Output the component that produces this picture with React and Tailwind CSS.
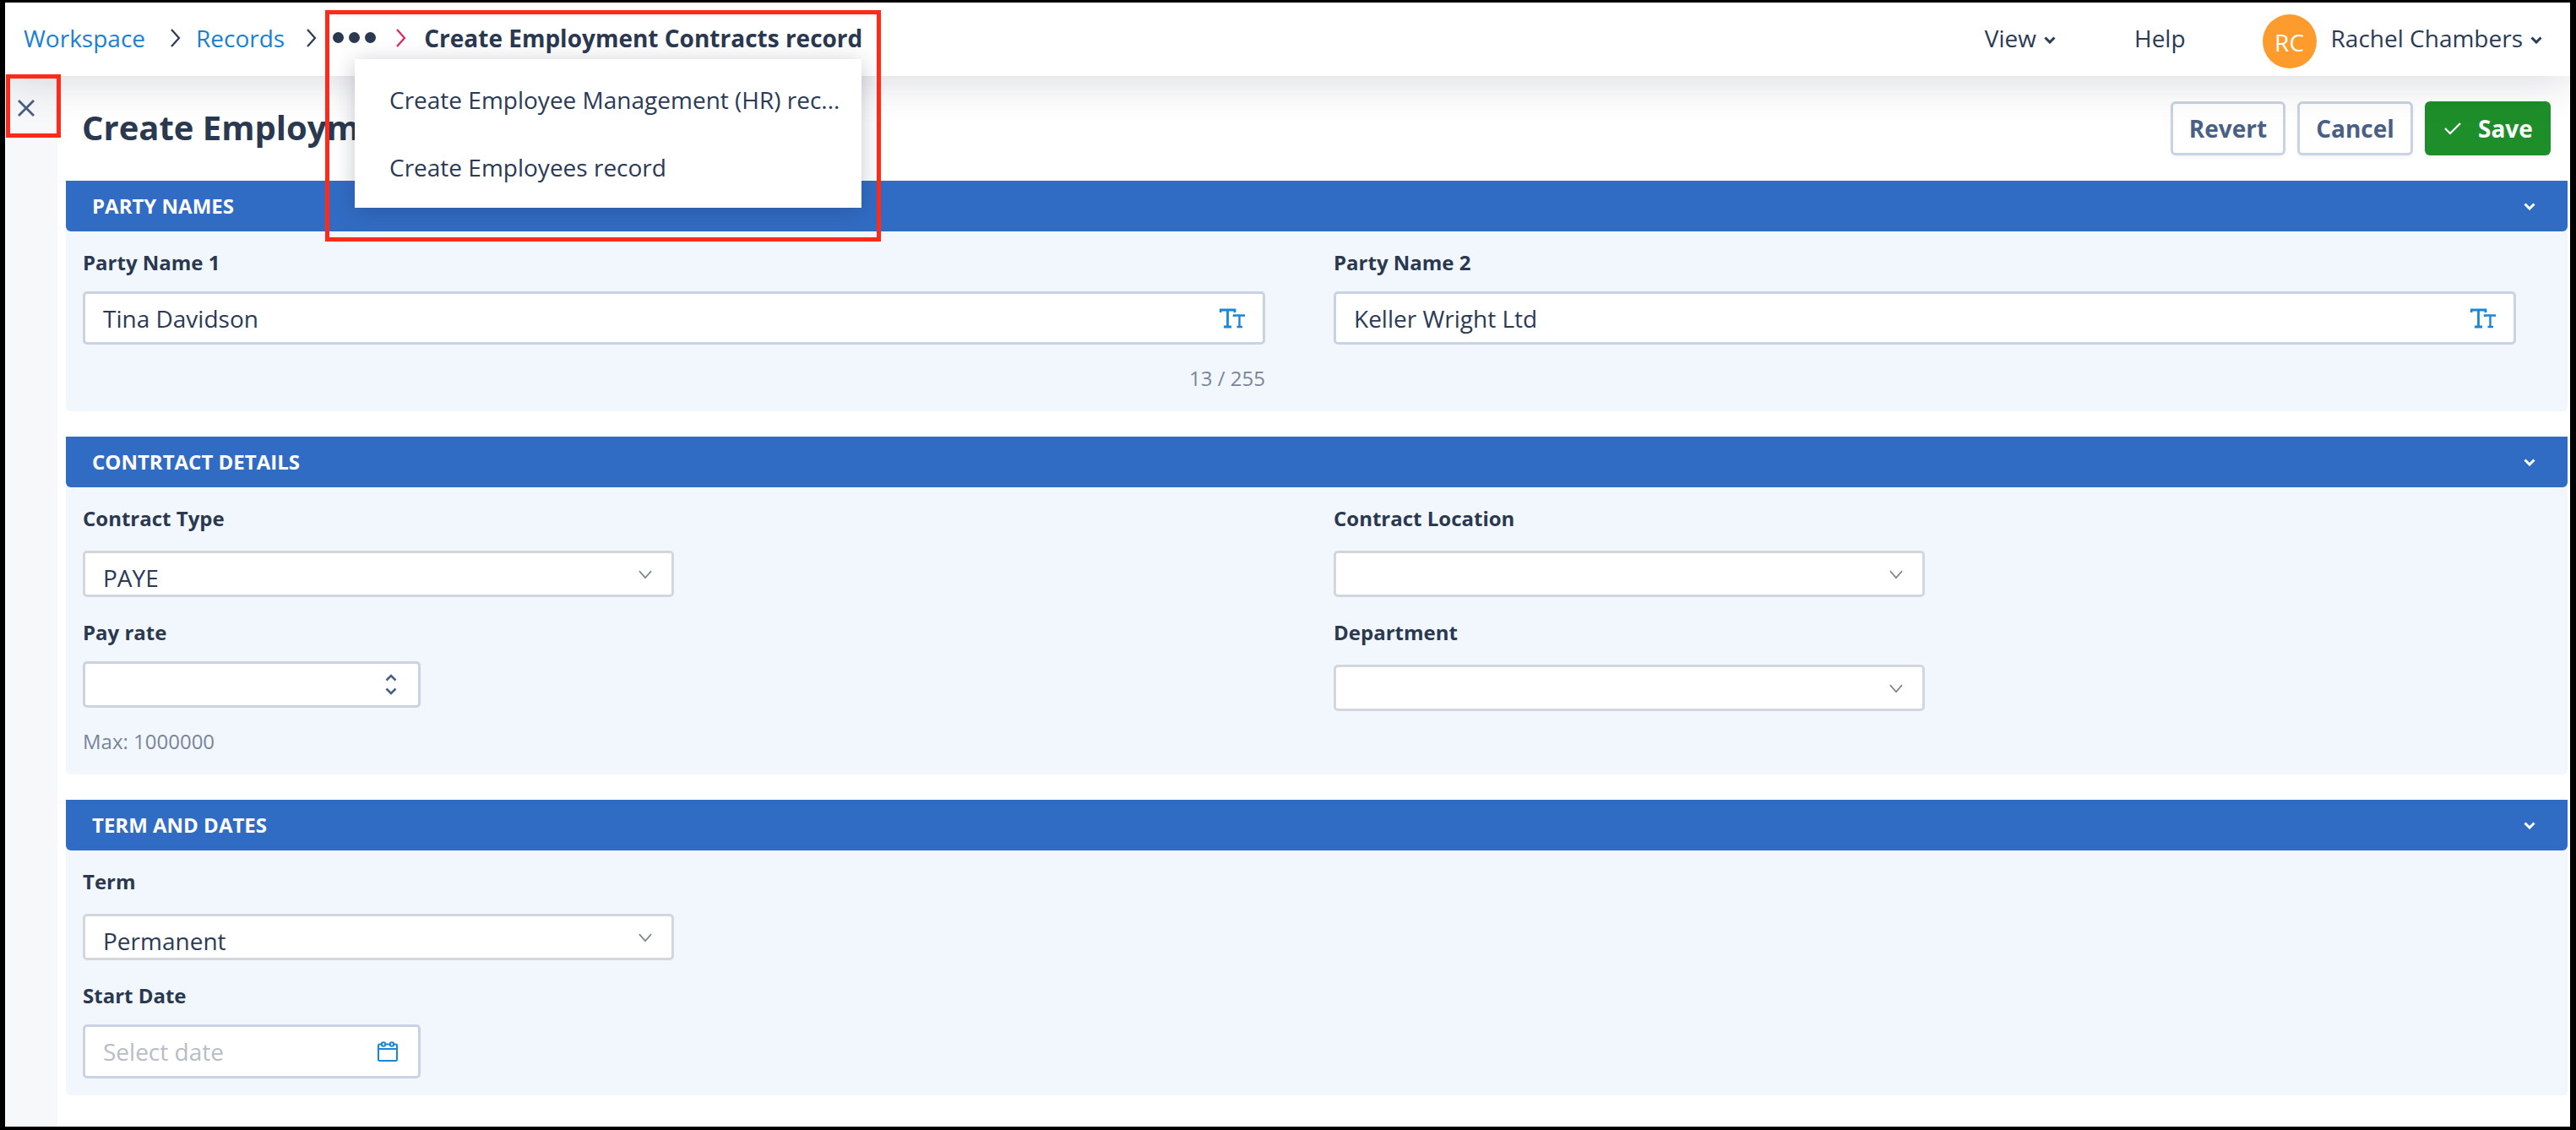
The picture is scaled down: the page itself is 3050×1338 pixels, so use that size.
import React from "react";

const Chev = ({ className = "", w = 14, h = 9, sw = 3, color = "currentColor" }) => (
  <svg width={w} height={h} viewBox="0 0 14 9" className={className} fill="none" preserveAspectRatio="none">
    <path d="M1.5 1.5 L7 7 L12.5 1.5" stroke={color} strokeWidth={sw} />
  </svg>
);

const Crumb = ({ color = "#2b3a55" }) => (
  <svg width="14" height="24" viewBox="0 0 14 24" fill="none">
    <path d="M2 2 L11 12 L2 22" stroke={color} strokeWidth="2.2" />
  </svg>
);

const Tt = () => (
  <svg width="30" height="24" viewBox="0 0 30 24" fill="none" stroke="#1a86d8" strokeWidth="2.8">
    <path d="M1 5 V2 H18 V5 M9.5 2 V22 M5 22 H14" />
    <path d="M17 10 V8.5 H30 V10 M23.5 8.5 V22 M20.5 22 H27" strokeWidth="2.4" />
  </svg>
);

const Label = ({ children }) => (
  <div className="text-[24px] leading-[34px] font-bold text-[#2a3850]">{children}</div>
);

const TextField = ({ label, value, count }) => (
  <div className="flex flex-col">
    <Label>{label}</Label>
    <div className="mt-[17px] h-[63px] bg-white border-[3px] border-[#c9d3e3] rounded-[5px] flex items-center justify-between pl-[21px] pr-[21px]">
      <span className="text-[28px] text-[#2b3a55]">{value}</span>
      <Tt />
    </div>
    {count && (
      <div className="mt-[23px] text-right text-[24px] leading-[34px] text-[#79859a]">{count}</div>
    )}
  </div>
);

const SelectField = ({ label, value, className = "" }) => (
  <div className={`flex flex-col ${className}`}>
    <Label>{label}</Label>
    <div className="mt-[21px] w-[700px] h-[55px] bg-white border-[3px] border-[#d3d6dc] rounded-[5px] flex items-start justify-between pl-[21px] pr-[22px]">
      <span className="text-[28px] leading-[38px] mt-[10px] text-[#2b3a55] h-[38px]">{value}</span>
      <Chev w={18} h={13} sw={1.3} color="#7b8594" className="mt-[19px]" />
    </div>
  </div>
);

const Section = ({ title, children }) => (
  <section className="bg-[#f2f7fe] rounded-[6px]">
    <header className="h-[60px] bg-[#316cc4] rounded-b-[6px] flex items-center justify-between pl-[31px] pr-[38px]">
      <span className="text-[24px] font-bold text-white uppercase">{title}</span>
      <Chev className="text-white" w={14} h={9} sw={3} />
    </header>
    {children}
  </section>
);

export default function App() {
  return (
    <div
      className="relative w-[3050px] h-[1338px] bg-white border-black border-t-[3px] border-l-[6px] border-r-[7px] border-b-[4px] flex flex-col overflow-hidden"
      style={{ fontFamily: '"Open Sans", "Noto Sans", sans-serif' }}
    >
      <nav className="relative z-10 h-[87px] shrink-0 bg-white flex items-center pl-[22px] pr-[33px] shadow-[0_8px_50px_rgba(30,40,60,0.16)] text-[28px] text-[#2b3a55]">
        <div className="flex items-center mt-[-4px]">
          <a className="text-[#1a80d0]">Workspace</a>
          <span className="ml-[29px]"><Crumb /></span>
          <a className="ml-[17px] text-[#1a80d0]">Records</a>
          <span className="ml-[25px]"><Crumb /></span>
          <span className="ml-[18px] flex gap-[6px]">
            <i className="block w-[13px] h-[13px] rounded-full bg-[#2a3850]" />
            <i className="block w-[13px] h-[13px] rounded-full bg-[#2a3850]" />
            <i className="block w-[13px] h-[13px] rounded-full bg-[#2a3850]" />
          </span>
          <span className="ml-[23px]"><Crumb color="#e0245e" /></span>
          <span className="ml-[20px] font-bold text-[#2a3850]">Create Employment Contracts record</span>
        </div>
        <div className="ml-auto flex items-center mt-[-4px]">
          <span>View</span>
          <Chev className="ml-[9px] mt-[5px]" />
          <span className="ml-[93px]">Help</span>
          <div className="ml-[91px] w-[64px] h-[64px] rounded-full bg-[#fd9c2d] text-white flex items-center justify-center mt-[8px] pt-[2px]">RC</div>
          <span className="ml-[17px]">Rachel Chambers</span>
          <Chev className="ml-[9px] mt-[5px]" />
        </div>
      </nav>

      <div className="flex flex-1 min-h-0">
        <aside className="w-[62px] shrink-0 bg-[#f7f8fa] flex justify-center pt-[27px] pr-[12px]">
          <svg width="22" height="22" viewBox="0 0 22 22" fill="none" stroke="#4a5f85" strokeWidth="2.8">
            <path d="M2 2 L20 20 M20 2 L2 20" />
          </svg>
        </aside>
        <main className="flex-1 min-w-0 pl-[10px] pr-[3px]">
          <div className="h-[124px] flex items-center justify-between pl-[19px] pr-[20px]">
            <h1 className="text-[40px] font-bold text-[#2a3850] mt-[-2px]">Create Employment Contracts record</h1>
            <div className="flex gap-[14px] text-[28px] font-bold">
              <button className="w-[136px] h-[64px] bg-white border-[3px] border-[#c9d3e3] rounded-[6px] text-[#4a5f85] shadow-[0_3px_4px_rgba(0,0,0,0.04)]">Revert</button>
              <button className="w-[137px] h-[64px] bg-white border-[3px] border-[#c9d3e3] rounded-[6px] text-[#4a5f85] shadow-[0_3px_4px_rgba(0,0,0,0.04)]">Cancel</button>
              <button className="w-[149px] h-[64px] bg-[#1e8e2a] rounded-[6px] text-white flex items-center pl-[23px] shadow-[0_3px_4px_rgba(0,0,0,0.04)]">
                <svg width="20" height="16" viewBox="0 0 20 16" fill="none" stroke="white" strokeWidth="2.2">
                  <path d="M1 8 L7 14 L19 2" />
                </svg>
                <span className="ml-[20px]">Save</span>
              </button>
            </div>
          </div>

          <div className="flex flex-col gap-[30px]">
            <Section title="Party Names">
              <div className="grid grid-cols-2 gap-x-[81px] pt-[20px] pb-[22px] pl-[20px] pr-[61px]">
                <TextField label="Party Name 1" value="Tina Davidson" count="13 / 255" />
                <TextField label="Party Name 2" value="Keller Wright Ltd" />
              </div>
            </Section>

            <Section title="Contrtact Details">
              <div className="grid grid-cols-2 gap-x-[81px] pt-[20px] pb-[22px] pl-[20px] pr-[61px]">
                <div className="flex flex-col">
                  <SelectField label="Contract Type" value="PAYE" />
                  <div className="mt-[25px]">
                    <Label>Pay rate</Label>
                  </div>
                  <div className="mt-[17px] w-[400px] h-[55px] bg-white border-[3px] border-[#c9d3e3] rounded-[5px] flex items-center justify-end pr-[25px]">
                    <div className="flex flex-col gap-[7px] text-[#4a5f85]">
                      <Chev w={14} h={9} sw={2.6} className="rotate-180" />
                      <Chev w={14} h={9} sw={2.6} />
                    </div>
                  </div>
                  <div className="mt-[23px] text-[24px] leading-[34px] text-[#79859a]">Max: 1000000</div>
                </div>
                <div className="flex flex-col">
                  <SelectField label="Contract Location" />
                  <SelectField label="Department" className="mt-[25px]" />
                </div>
              </div>
            </Section>

            <Section title="Term and Dates">
              <div className="pt-[20px] pb-[20px] pl-[20px] flex flex-col">
                <SelectField label="Term" value="Permanent" />
                <div className="mt-[25px]">
                  <Label>Start Date</Label>
                </div>
                <div className="mt-[17px] w-[400px] h-[64px] bg-white border-[3px] border-[#c9d3e3] rounded-[5px] flex items-center justify-between pl-[21px] pr-[24px]">
                  <span className="text-[28px] text-[#b9bdc4]">Select date</span>
                  <svg width="24" height="24" viewBox="0 0 24 24" fill="none" stroke="#1a86d8" strokeWidth="2">
                    <rect x="1" y="3.5" width="22" height="19.5" rx="1.5" />
                    <path d="M1 9 H23" />
                    <circle cx="7" cy="3.5" r="2.2" fill="white" />
                    <circle cx="17" cy="3.5" r="2.2" fill="white" />
                  </svg>
                </div>
              </div>
            </Section>
          </div>
        </main>
      </div>

      <div className="absolute z-20 left-[414px] top-[67px] w-[600px] h-[176px] bg-white shadow-[0_4px_24px_rgba(30,40,60,0.25)] flex flex-col justify-center pl-[41px] text-[28px] text-[#2b3a55]">
        <div className="h-[80px] flex items-center">Create Employee Management (HR) rec...</div>
        <div className="h-[80px] flex items-center">Create Employees record</div>
      </div>

      <div className="absolute z-30 left-[379px] top-[9px] w-[658px] h-[274px] border-[5px] border-[#ff2a1a]" />
      <div className="absolute z-30 left-[1px] top-[85px] w-[65px] h-[75px] border-[5px] border-[#ff2a1a]" />
    </div>
  );
}
